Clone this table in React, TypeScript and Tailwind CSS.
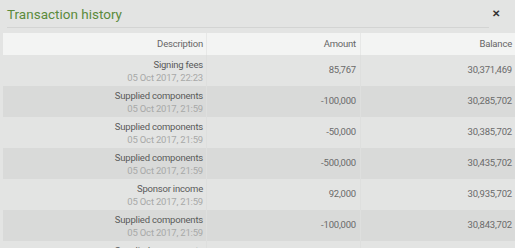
import React from 'react';

const rows = [
  { desc: 'Signing fees', date: '05 Oct 2017, 22:23', amount: '85,767', balance: '30,371,469' },
  { desc: 'Supplied components', date: '05 Oct 2017, 21:59', amount: '-100,000', balance: '30,285,702' },
  { desc: 'Supplied components', date: '05 Oct 2017, 21:59', amount: '-50,000', balance: '30,385,702' },
  { desc: 'Supplied components', date: '05 Oct 2017, 21:59', amount: '-500,000', balance: '30,435,702' },
  { desc: 'Sponsor income', date: '05 Oct 2017, 21:59', amount: '92,000', balance: '30,935,702' },
  { desc: 'Supplied components', date: '05 Oct 2017, 21:59', amount: '-100,000', balance: '30,843,702' },
  { desc: 'Supplied components', date: '05 Oct 2017, 21:59', amount: '-100,000', balance: '30,743,702' },
];

export default function App() {
  return (
    <div className="w-[515px] h-[248px] overflow-hidden bg-[#e3e4e3] font-['Roboto',sans-serif]">
      <div className="flex items-start justify-between h-[27px] pl-[7px] pr-[15px]">
        <h1 className="text-[13.5px] text-[#5b8b3c] leading-none pt-[8px]">Transaction history</h1>
        <span className="text-[10px] font-bold text-[#333] leading-none pt-[9px]">✕</span>
      </div>
      <div className="h-px bg-[#d3d4d3] ml-[7px] w-[482px]" />
      <div className="pl-[3px] pt-[5px]">
        <div className="grid grid-cols-[204px_154px_154px] h-[22px] bg-[#f3f4f3] text-[9.5px] tracking-[-0.2px] text-[#666]">
          <div className="pr-[3px] flex items-center justify-end border-r border-[#e7e8e7]">Description</div>
          <div className="pr-[4px] flex items-center justify-end border-r border-[#e7e8e7]">Amount</div>
          <div className="pr-[3px] flex items-center justify-end">Balance</div>
        </div>
        {rows.map((r, i) => (
          <div
            key={i}
            className={`grid grid-cols-[204px_154px_154px] h-[31px] text-[9.5px] tracking-[-0.2px] ${i % 2 === 1 ? 'bg-[#d9dad9]' : 'bg-[#e3e4e3]'}`}
          >
            <div className="text-right pr-[3px] flex flex-col justify-center leading-[13px] border-r border-[#dedfde]">
              <div className="text-[#5a5a5a]">{r.desc}</div>
              <div className="text-[#a8a9a8]">{r.date}</div>
            </div>
            <div className="pr-[4px] flex items-center justify-end text-[#6a6a6a] border-r border-[#dedfde]">{r.amount}</div>
            <div className="pr-[3px] flex items-center justify-end text-[#6a6a6a]">{r.balance}</div>
          </div>
        ))}
      </div>
    </div>
  );
}
